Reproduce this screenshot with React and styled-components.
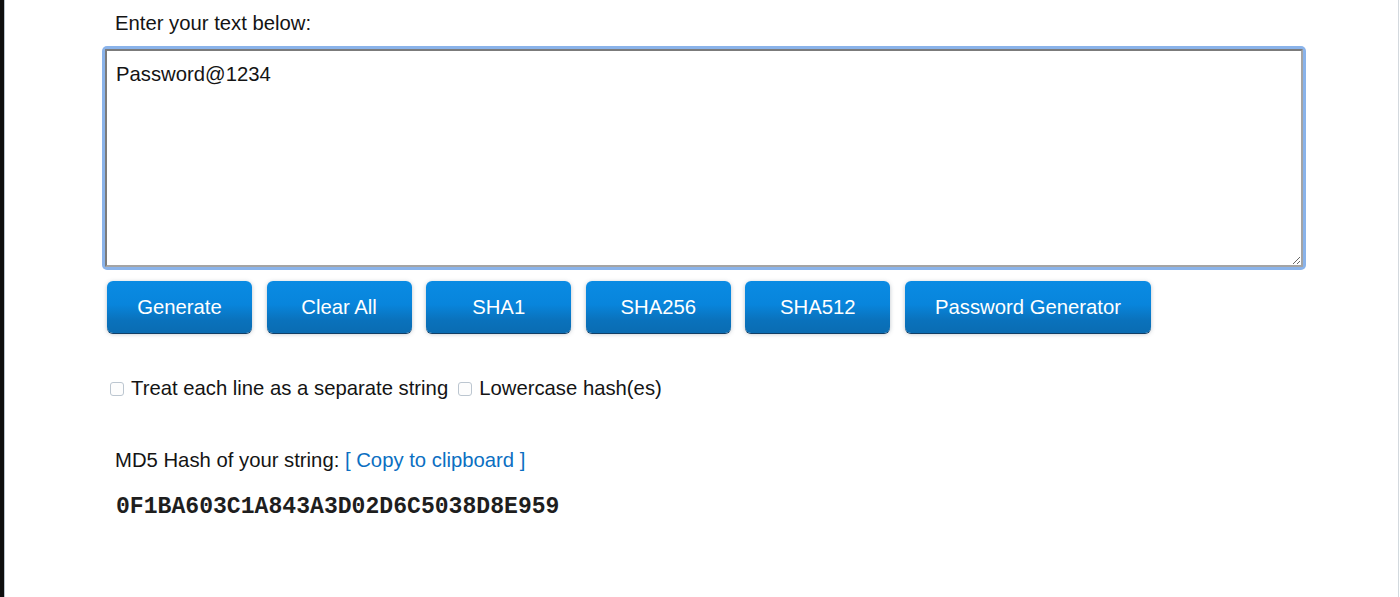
import React, { useState } from 'react';
import styled, { createGlobalStyle } from 'styled-components';

const GlobalStyle = createGlobalStyle`
  html, body {
    margin: 0;
    padding: 0;
    background: #ffffff;
  }
  body {
    font-family: "Liberation Sans", Arial, sans-serif;
    color: #141414;
  }
`

const Frame = styled.div`
  width: 1399px;
  height: 597px;
  box-sizing: border-box;
  border-left: 4px solid #0e0e0e;
`

const Content = styled.div`
  height: 100%;
  box-sizing: border-box;
  border-left: 1px solid #b9c3cc;
  border-right: 1px solid #d3d9de;
  padding: 12px 0 0 100px;
`

const Label = styled.div`
  font-size: 20.3px;
  line-height: 23px;
  padding-left: 10px;
  margin-bottom: ${p => p.gap || 0}px;
`

const Ring = styled.div`
  box-sizing: border-box;
  margin: -3px 0 0 -3px;
  padding: 3px;
  width: 1204px;
  height: 224px;
  background: #8ab3ea;
  border-radius: 5px;
`

const TextBox = styled.textarea`
  display: block;
  width: 100%;
  height: 100%;
  box-sizing: border-box;
  margin: 0;
  padding: 12px 9px;
  border: 2px solid;
  border-color: #7b7b7b #a4a4a4 #a4a4a4 #7b7b7b;
  border-radius: 1px;
  outline: none;
  font-family: "Liberation Sans", Arial, sans-serif;
  font-size: 20.3px;
  line-height: 23px;
  color: #141414;
  background: #ffffff;
`

const Buttons = styled.div`
  display: flex;
  gap: 14.6px;
  margin: 11px 0 0 2px;
`

const Button = styled.button`
  height: 52px;
  min-width: 145px;
  padding: 1px 30px 0;
  box-sizing: border-box;
  border: none;
  border-radius: 6px;
  background: linear-gradient(#0a8be3 0%, #0885dc 45%, #0a72bc 75%, #0a6cb2 100%);
  box-shadow: 0 1px 0 #123f66, 0 1px 4px rgba(60, 80, 100, 0.35);
  color: #ffffff;
  font-family: "Liberation Sans", Arial, sans-serif;
  font-size: 20.3px;
  cursor: pointer;
`

const Options = styled.div`
  display: flex;
  align-items: center;
  margin: 44px 0 0 5px;
  font-size: 20.3px;
  line-height: 23px;
`

const Option = styled.label`
  display: flex;
  align-items: center;
  margin-right: 10px;
`

const Check = styled.input`
  appearance: none;
  width: 14px;
  height: 14px;
  margin: 1px 7px 0 0;
  border: 1px solid #bcc6d0;
  border-radius: 3px;
  background: #fdfdfd;
`

const ResultLabel = styled(Label)`
  margin-top: 49px;
`

const Link = styled.a`
  color: #0b6fc2;
  text-decoration: none;
`

const Hash = styled.div`
  margin: 22px 0 0 11px;
  font-family: "Liberation Mono", "Courier New", monospace;
  font-weight: bold;
  font-size: 23.1px;
  line-height: 26px;
  color: #1e1e1e;
`

const buttons = ['Generate', 'Clear All', 'SHA1', 'SHA256', 'SHA512', 'Password Generator'];

export default function App() {
  const [text, setText] = useState('Password@1234');

  return (
    <>
      <GlobalStyle />
      <Frame>
        <Content>
          <Label gap={14}>Enter your text below:</Label>
          <Ring>
            <TextBox value={text} onChange={e => setText(e.target.value)} />
          </Ring>
          <Buttons>
            {buttons.map(b => <Button key={b}>{b}</Button>)}
          </Buttons>
          <Options>
            <Option><Check type="checkbox" />Treat each line as a separate string</Option>
            <Option><Check type="checkbox" />Lowercase hash(es)</Option>
          </Options>
          <ResultLabel>
            MD5 Hash of your string: <Link href="#">[ Copy to clipboard ]</Link>
          </ResultLabel>
          <Hash>0F1BA603C1A843A3D02D6C5038D8E959</Hash>
        </Content>
      </Frame>
    </>
  );
}
